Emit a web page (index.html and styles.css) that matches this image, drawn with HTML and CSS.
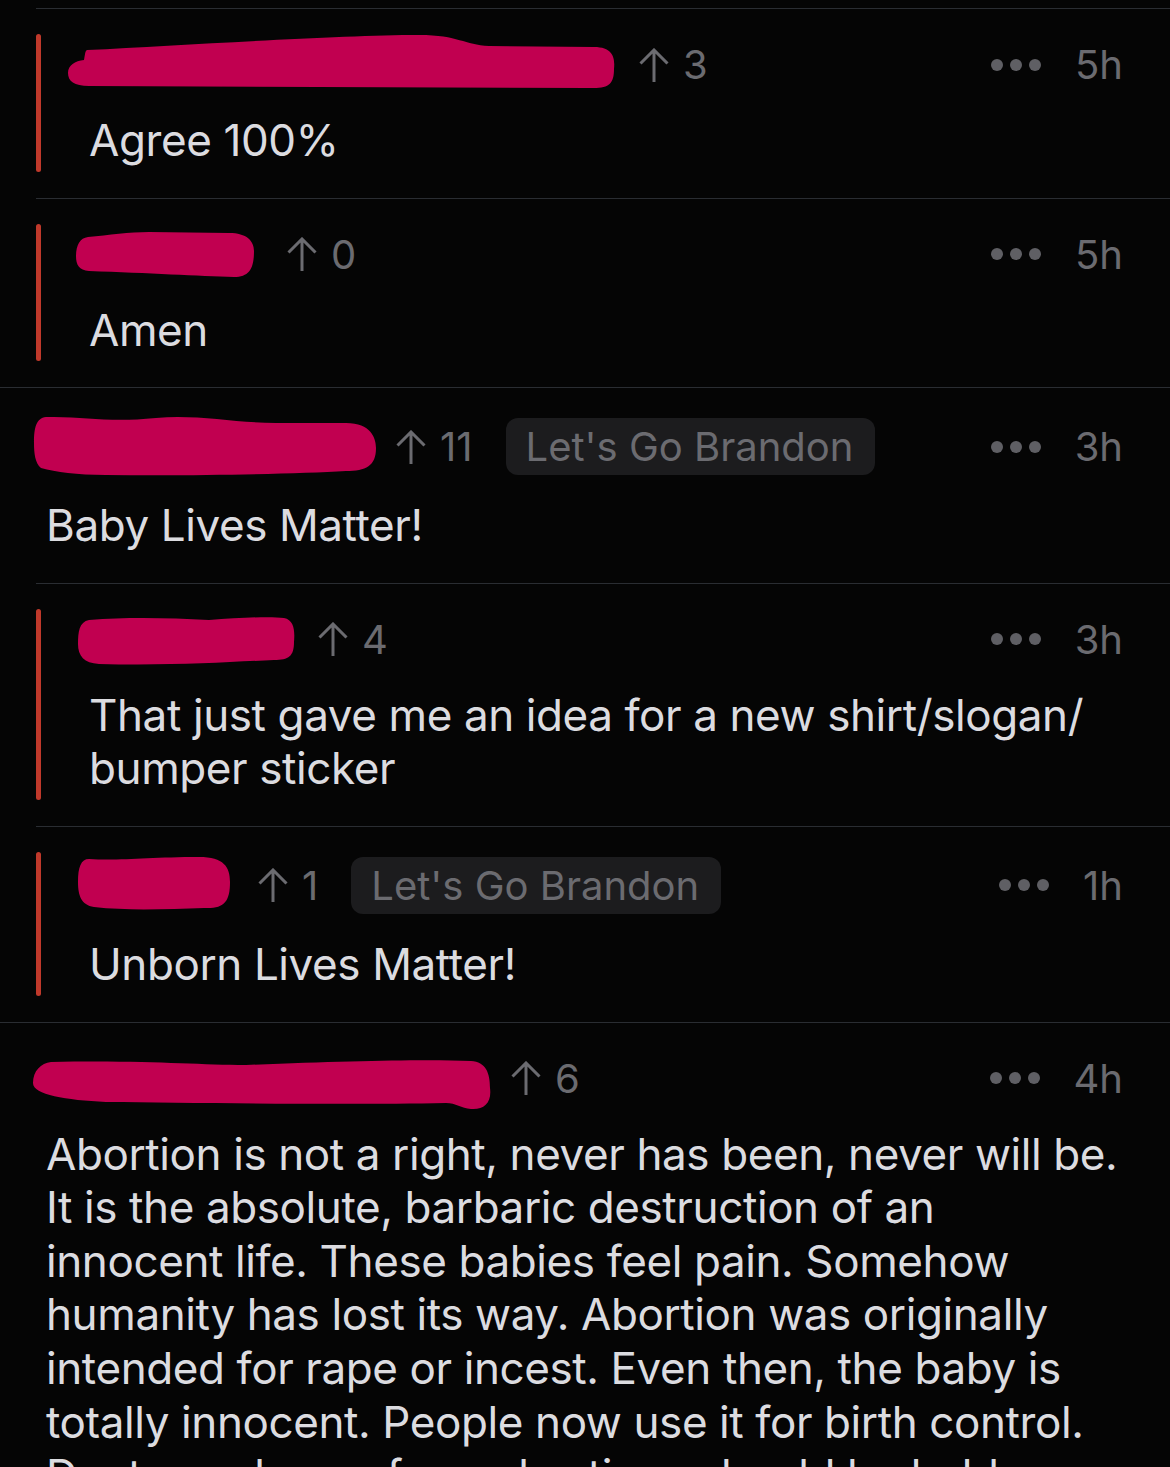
FILE: index.html
```html
<!DOCTYPE html>
<html>
<head>
    <link rel="stylesheet" href="styles.css">
</head>
<body>
    <div class="thread">

        <div class="comment reply">
            <div class="bar"></div>
            <div class="content">
                <div class="header">
                    <svg class="redact" width="526" height="51"><path d="M-2 11C100 6 250-4 330-4C370-4 375 6 400 7L505 8C525 8 526 20 525 30C525 45 520 50 500 49L0 47C-15 47-21 42-21 34C-21 26-14 22-5 21C-4 16-4 12-2 11Z"/></svg>
                    <span class="votes"><svg class="arrow" viewBox="0 0 30 34"><path d="M15 34V2M1.5 15.5L15 2l13.5 13.5"/></svg>3</span>
                    <span class="meta"><span class="more"><i></i><i></i><i></i></span><span class="age">5h</span></span>
                </div>
                <p class="body">Agree 100%</p>
            </div>
        </div>

        <div class="comment reply">
            <div class="bar"></div>
            <div class="content">
                <div class="header">
                    <svg class="redact" width="174" height="51"><path d="M-1 8C20 6 40 3 60 3L140 4C158 4 165 12 165 22C165 40 160 48 145 48C110 47 60 44 0 42C-10 41-13 36-13 27C-13 16-9 9-1 8Z"/></svg>
                    <span class="votes"><svg class="arrow" viewBox="0 0 30 34"><path d="M15 34V2M1.5 15.5L15 2l13.5 13.5"/></svg>0</span>
                    <span class="meta"><span class="more"><i></i><i></i><i></i></span><span class="age">5h</span></span>
                </div>
                <p class="body">Amen</p>
            </div>
        </div>

        <div class="comment top">
            <div class="header">
                <svg class="redact" width="326" height="57"><path d="M0-1C40-2 60 5 110 0C150-4 190 5 230 5L300 5C325 5 330 20 330 30C330 48 320 53 300 53C250 56 150 58 60 57C30 57 10 54-5 50C-11 45-12 35-12 25C-12 10-10 0 0-1Z"/></svg>
                <span class="votes"><svg class="arrow" viewBox="0 0 30 34"><path d="M15 34V2M1.5 15.5L15 2l13.5 13.5"/></svg>11</span>
                <span class="flair">Let's Go Brandon</span>
                <span class="meta"><span class="more"><i></i><i></i><i></i></span><span class="age">3h</span></span>
            </div>
            <p class="body">Baby Lives Matter!</p>
        </div>

        <div class="comment reply">
            <div class="bar"></div>
            <div class="content">
                <div class="header">
                    <svg class="redact" width="205" height="51"><path d="M0 6C40 3 80 4 120 6C150 4 180 2 195 4C205 6 206 16 205 28C205 42 200 46 185 46C140 48 80 52 10 50C-5 49-11 42-11 30C-11 18-10 8 0 6Z"/></svg>
                    <span class="votes"><svg class="arrow" viewBox="0 0 30 34"><path d="M15 34V2M1.5 15.5L15 2l13.5 13.5"/></svg>4</span>
                    <span class="meta"><span class="more"><i></i><i></i><i></i></span><span class="age">3h</span></span>
                </div>
                <p class="body">That just gave me an idea for a new shirt/slogan/<wbr>bumper sticker</p>
            </div>
        </div>

        <div class="comment reply">
            <div class="bar"></div>
            <div class="content">
                <div class="header">
                    <svg class="redact" width="145" height="57"><path d="M0 2C30 4 60 0 110 0C135 0 141 10 141 25C141 45 135 52 115 51C80 52 40 54 5 50C-8 48-11 38-11 25C-11 10-8 2 0 2Z"/></svg>
                    <span class="votes"><svg class="arrow" viewBox="0 0 30 34"><path d="M15 34V2M1.5 15.5L15 2l13.5 13.5"/></svg>1</span>
                    <span class="flair">Let's Go Brandon</span>
                    <span class="meta"><span class="more"><i></i><i></i><i></i></span><span class="age">1h</span></span>
                </div>
                <p class="body">Unborn Lives Matter!</p>
            </div>
        </div>

        <div class="comment top">
            <div class="header">
                <svg class="redact" width="441" height="51"><path d="M5 9C100 7 150 12 200 12C300 8 380 6 425 8C440 9 444 20 444 35C446 50 438 57 425 56C415 55 410 50 400 50C300 52 150 50 60 49C20 47-13 42-13 30C-13 18-5 10 5 9Z"/></svg>
                <span class="votes"><svg class="arrow" viewBox="0 0 30 34"><path d="M15 34V2M1.5 15.5L15 2l13.5 13.5"/></svg>6</span>
                <span class="meta"><span class="more"><i></i><i></i><i></i></span><span class="age">4h</span></span>
            </div>
            <p class="body">Abortion is not a right, never has been, never will be. It is the absolute, barbaric destruction of an innocent life. These babies feel pain. Somehow humanity has lost its way. Abortion was originally intended for rape or incest. Even then, the baby is totally innocent. People now use it for birth control. Doctors who perform abortions should be held accountable, and they will be.</p>
        </div>

    </div>
</body>
</html>
```

FILE: styles.css
```css
body {
    margin: 0;
    background: #050505;
    font-family: Inter, "Noto Sans", sans-serif;
    overflow: hidden;
}
.thread {
    padding-top: 8px;
}
.comment {
    border-top: 1px solid #2a2d32;
}
.reply {
    display: flex;
    margin-left: 36px;
    padding: 25px 47px 26px 0;
}
.reply .bar {
    flex: none;
    width: 5px;
    border-radius: 3px;
    background: #c0392b;
}
.reply .content {
    flex: 1;
    padding: 5px 0 4px 48px;
}
.top {
    padding: 30px 47px 30px 46px;
}
.header {
    display: flex;
    align-items: center;
    min-height: 51px;
}
.redact {
    flex: none;
    overflow: visible;
    margin-right: 24px;
    fill: #c10050;
}
.votes {
    display: flex;
    align-items: center;
    gap: 14px;
    font-size: 40px;
    color: #6b6b70;
}
.arrow {
    width: 30px;
    height: 34px;
    fill: none;
    stroke: currentColor;
    stroke-width: 3;
}
.flair {
    margin-left: 33px;
    padding: 0 22px 0 20px;
    height: 57px;
    line-height: 57px;
    border-radius: 12px;
    background: #1c1c1e;
    color: #6b6b70;
    font-size: 40px;
}
.meta {
    display: flex;
    align-items: center;
    gap: 34px;
    margin-left: auto;
    font-size: 40px;
    color: #6b6b70;
}
.more {
    display: flex;
    gap: 7px;
}
.more i {
    width: 12px;
    height: 12px;
    border-radius: 50%;
    background: #5f5f64;
}
.body {
    margin: 24px 0 0;
    font-size: 44px;
    line-height: 53.6px;
    letter-spacing: -0.4px;
    color: #dcdce0;
}
```
